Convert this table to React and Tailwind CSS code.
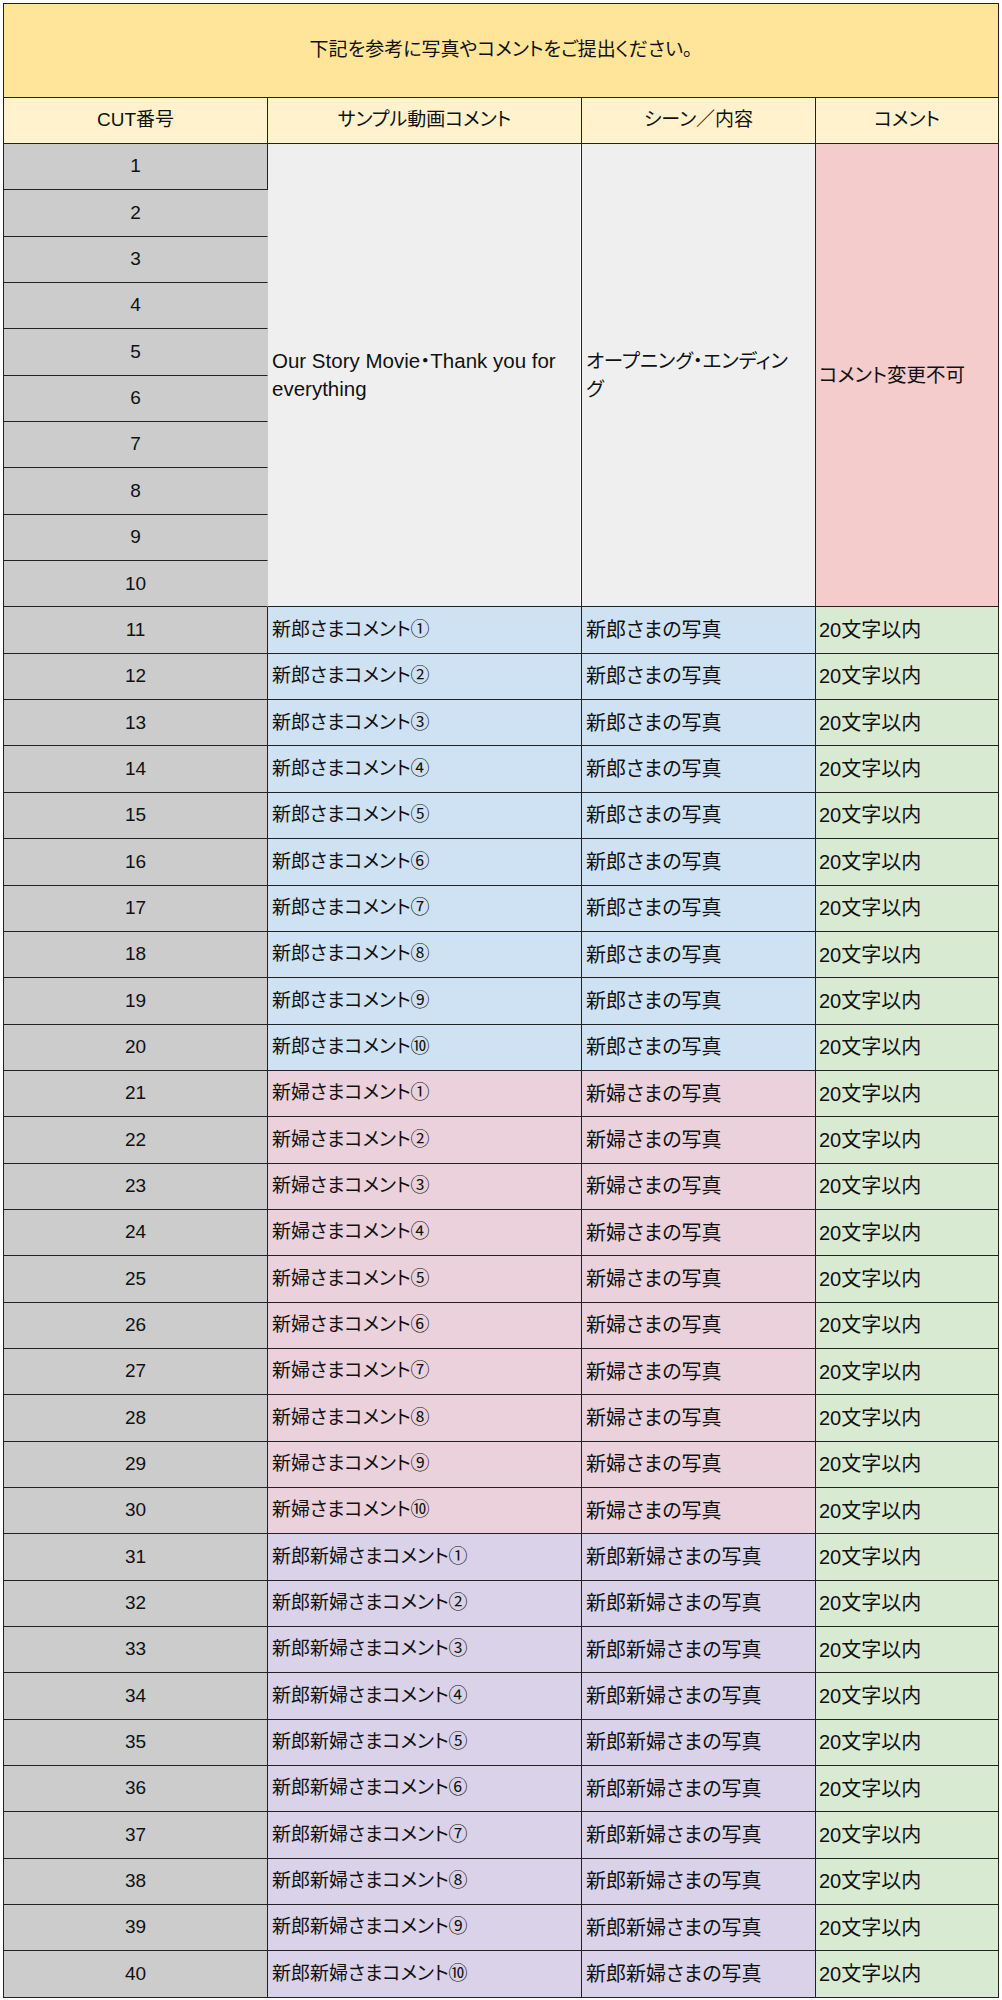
import React from "react";

const circ = ["①", "②", "③", "④", "⑤", "⑥", "⑦", "⑧", "⑨", "⑩"];

function rowData(i) {
  if (i <= 10) return null;
  const k = (i - 1) % 10;
  if (i <= 20)
    return { a: "新郎さまコメント" + circ[k], b: "新郎さまの写真", bg: "bg-[#cfe2f3]" };
  if (i <= 30)
    return { a: "新婦さまコメント" + circ[k], b: "新婦さまの写真", bg: "bg-[#ead1dc]" };
  return { a: "新郎新婦さまコメント" + circ[k], b: "新郎新婦さまの写真", bg: "bg-[#d9d2e9]" };
}

export default function App() {
  const rows = Array.from({ length: 40 }, (_, i) => i + 1);
  return (
    <div className="bg-white min-h-[2000px] pt-[3px] pl-[3px] text-[#111] [font-family:'Liberation_Sans','Noto_Sans_CJK_JP',sans-serif] [font-feature-settings:'palt']">
      <div className="w-[996px] grid grid-cols-[264px_314px_234px_183px] grid-rows-[94px_46px_repeat(40,46.35px)] border-l border-t border-[#222] text-[19px]">
        <div className="col-span-4 bg-[#ffe599] border-r border-b border-[#222] flex items-center justify-center">
          下記を参考に写真やコメントをご提出ください。
        </div>
        {["CUT番号", "サンプル動画コメント", "シーン／内容", "コメント"].map((h) => (
          <div
            key={h}
            className="bg-[#fff2cc] border-r border-b border-[#222] flex items-center justify-center"
          >
            {h}
          </div>
        ))}
        {rows.map((i) => {
          const d = rowData(i);
          const numCell = (
            <div
              key={"n" + i}
              className={
                "col-start-1 bg-[#cccccc] border-b border-[#222] flex items-center justify-center " +
                (i === 1 || i > 10 ? "border-r" : "border-r border-r-[#cccccc]")
              }
            >
              {i}
            </div>
          );
          if (i === 1) {
            return (
              <React.Fragment key={i}>
                {numCell}
                <div className="col-start-2 row-span-10 bg-[#efefef] border-r border-b border-[#222] shadow-[inset_-1px_0_0_#ffffff] flex items-center px-[4px] leading-[28px] text-[20.5px]">
                  <span>
                    Our Story Movie・Thank you for
                    <br />
                    everything
                  </span>
                </div>
                <div className="col-start-3 row-span-10 bg-[#efefef] border-r border-b border-[#222] flex items-center px-[4px] leading-[28px] text-[19.5px]">
                  <span>
                    オープニング・エンディン
                    <br />
                    グ
                  </span>
                </div>
                <div className="col-start-4 row-span-10 bg-[#f4cccc] border-r border-b border-[#222] flex items-center px-[3px] text-[19.5px]">
                  コメント変更不可
                </div>
              </React.Fragment>
            );
          }
          if (!d) return numCell;
          return (
            <React.Fragment key={i}>
              {numCell}
              <div className={"col-start-2 border-r border-b border-[#222] flex items-center px-[4px] " + d.bg}>
                {d.a}
              </div>
              <div className={"col-start-3 border-r border-b border-[#222] flex items-center px-[4px] text-[20px] " + d.bg}>
                {d.b}
              </div>
              <div className="col-start-4 bg-[#d9ead3] border-r border-b border-[#222] flex items-center px-[3px] text-[20px]">
                20文字以内
              </div>
            </React.Fragment>
          );
        })}
      </div>
    </div>
  );
}
